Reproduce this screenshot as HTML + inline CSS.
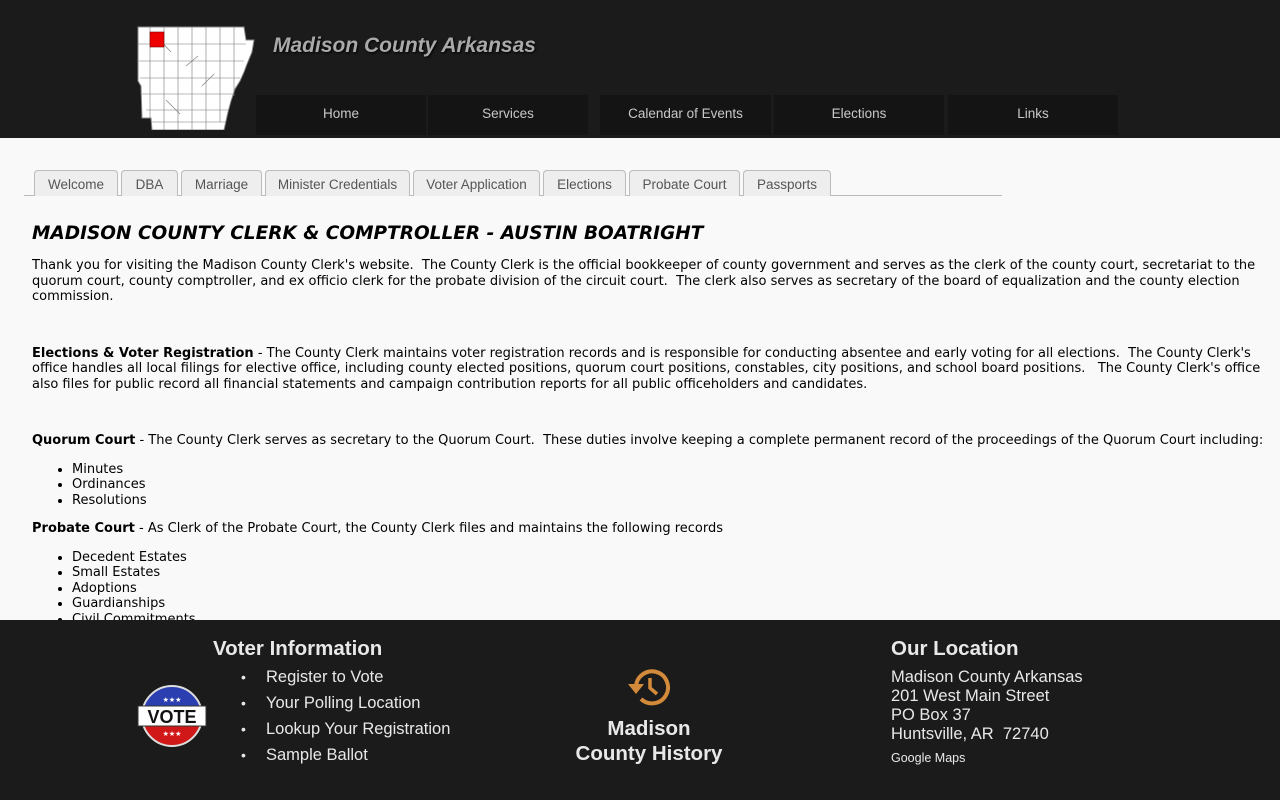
<!DOCTYPE html>
<html><head><meta charset="utf-8"><style>
*{margin:0;padding:0;box-sizing:border-box}
body{width:1280px;height:800px;overflow:hidden;background:#f9f9f9;font-family:"DejaVu Sans",Verdana,sans-serif;position:relative}
#hdr{position:absolute;left:0;top:0;width:1280px;height:138px;background:#1b1b1b}
#title{position:absolute;left:273px;top:34px;font:italic bold 21px "Liberation Sans",sans-serif;color:#a9a9a9;text-shadow:1px 1px 2px #000}
#nav div{position:absolute;top:95px;height:40px;background:#141414;color:#c8c8c8;font:13.5px "Liberation Sans",sans-serif;text-align:center;line-height:38px}
#map{position:absolute;left:136px;top:26px}
#tabs{position:absolute;left:24px;top:170px;width:978px;height:26px;border-bottom:1px solid #bbb}
.tab{position:absolute;top:0;height:26px;border:1px solid #bbb;border-bottom:none;border-radius:4px 4px 0 0;background:#eee;color:#555;font:13.5px "Liberation Sans",sans-serif;text-align:center;line-height:27px}
#main{position:absolute;left:32px;top:223px;width:1240px;font-size:13px;line-height:15.5px;color:#000}
h1{font:italic bold 18.5px "DejaVu Sans",sans-serif;margin-bottom:14px}
p{margin:0}
ul{margin:13px 0 0 40px}
#ftr{position:absolute;left:0;top:620px;width:1280px;height:180px;background:#1b1b1b;color:#e8e8e8;font-family:"Liberation Sans",sans-serif}
.h{font-weight:bold;font-size:20.5px;position:absolute}
.fl{position:absolute;left:266px;font-size:16.5px}
.dot{position:absolute;left:241px;font-size:14px}
.loc{position:absolute;left:891px;font-size:16.5px}
</style></head><body>
<div id="hdr">
<svg id="map" width="120" height="104" viewBox="0 0 120 104">
<path d="M2 1 L108 1 L110 14 L118 14 L116 26 L111 38 L108 46 L104 55 L99 63 L95 75 L92 86 L90 95 L88 104 L16 104 L15 92 L6 92 L5 60 L2 55 Z" fill="#fff" stroke="#888" stroke-width="1"/>
<g stroke="#777" stroke-width="0.6" fill="none">
<path d="M2 18 H110 M3 35 H108 M4 52 H104 M6 68 H98 M10 84 H93 M15 96 H90"/>
<path d="M14 1 V92 M28 1 V104 M42 1 V104 M56 1 V104 M70 1 V104 M84 1 V96 M98 1 V70"/>
<path d="M20 10 L35 26 M50 40 L62 30 M66 60 L78 48 M30 74 L44 88"/>
</g>
<rect x="14" y="6" width="14" height="15" fill="#e00" stroke="#700" stroke-width="0.6"/>
</svg>
<div id="title">Madison County Arkansas</div>
<div id="nav">
<div style="left:256px;width:170px">Home</div><div style="left:428px;width:160px">Services</div><div style="left:600px;width:171px">Calendar of Events</div><div style="left:774px;width:170px">Elections</div><div style="left:948px;width:170px">Links</div>
</div>
</div>
<div id="tabs">
<div class="tab" style="left:10px;width:84px">Welcome</div>
<div class="tab" style="left:97px;width:57px">DBA</div>
<div class="tab" style="left:157px;width:81px">Marriage</div>
<div class="tab" style="left:241px;width:145px">Minister Credentials</div>
<div class="tab" style="left:389px;width:127px">Voter Application</div>
<div class="tab" style="left:519px;width:83px">Elections</div>
<div class="tab" style="left:605px;width:111px">Probate Court</div>
<div class="tab" style="left:719px;width:88px">Passports</div>
</div>
<div id="main">
<h1>MADISON COUNTY CLERK &amp; COMPTROLLER - AUSTIN BOATRIGHT</h1>
<p>Thank you for visiting the Madison County Clerk's website.&nbsp; The County Clerk is the official bookkeeper of county government and serves as the clerk of the county court, secretariat to the quorum court, county comptroller, and ex officio clerk for the probate division of the circuit court.&nbsp; The clerk also serves as secretary of the board of equalization and the county election commission.</p>
<p style="margin-top:41px"><b>Elections &amp; Voter Registration</b> - The County Clerk maintains voter registration records and is responsible for conducting absentee and early voting for all elections.&nbsp; The County Clerk's office handles all local filings for elective office, including county elected positions, quorum court positions, constables, city positions, and school board positions.&nbsp;&nbsp; The County Clerk's office also files for public record all financial statements and campaign contribution reports for all public officeholders and candidates.</p>
<p style="margin-top:41px"><b>Quorum Court</b> - The County Clerk serves as secretary to the Quorum Court.&nbsp; These duties involve keeping a complete permanent record of the proceedings of the Quorum Court including:</p>
<ul><li>Minutes</li><li>Ordinances</li><li>Resolutions</li></ul>
<p style="margin-top:13px"><b>Probate Court</b> - As Clerk of the Probate Court, the County Clerk files and maintains the following records</p>
<ul><li>Decedent Estates</li><li>Small Estates</li><li>Adoptions</li><li>Guardianships</li><li>Civil Commitments</li></ul>
</div>
<div id="ftr">
<div class="h" style="left:213px;top:17px">Voter Information</div>
<div class="dot" style="top:49px">•</div><div class="fl" style="top:48px">Register to Vote</div>
<div class="dot" style="top:75px">•</div><div class="fl" style="top:74px">Your Polling Location</div>
<div class="dot" style="top:101px">•</div><div class="fl" style="top:100px">Lookup Your Registration</div>
<div class="dot" style="top:127px">•</div><div class="fl" style="top:126px">Sample Ballot</div>
<svg style="position:absolute;left:136px;top:65px" width="72" height="62" viewBox="0 0 72 62">
<defs><clipPath id="c"><circle cx="36" cy="31" r="30"/></clipPath></defs>
<g clip-path="url(#c)"><rect x="0" y="0" width="72" height="31" fill="#2b3fb0"/><rect x="0" y="31" width="72" height="31" fill="#d01818"/></g>
<circle cx="36" cy="31" r="30" fill="none" stroke="#ddd" stroke-width="2"/>
<rect x="2" y="21" width="68" height="20" fill="#fff" stroke="#333"/>
<text x="36" y="38" text-anchor="middle" font-family="Liberation Sans" font-weight="bold" font-size="18" fill="#111">VOTE</text>
<text x="36" y="17" text-anchor="middle" font-size="7" fill="#fff">★★★</text>
<text x="36" y="51" text-anchor="middle" font-size="7" fill="#fff">★★★</text>
</svg>
<svg style="position:absolute;left:626px;top:46px" width="46" height="42" viewBox="0 0 46 42">
<path d="M10 21 A16 16 0 1 1 15 33" fill="none" stroke="#d38a3a" stroke-width="4"/>
<path d="M2 18 L18 18 L10 28 Z" fill="#d38a3a"/>
<path d="M24 12 V22 L31 28" fill="none" stroke="#d38a3a" stroke-width="3.5"/>
</svg>
<div class="h" style="left:560px;width:178px;text-align:center;top:96px;line-height:25px">Madison<br>County History</div>
<div class="h" style="left:891px;top:17px">Our Location</div>
<div class="loc" style="top:48px">Madison County Arkansas</div>
<div class="loc" style="top:67px">201 West Main Street</div>
<div class="loc" style="top:86px">PO Box 37</div>
<div class="loc" style="top:105px">Huntsville, AR&nbsp; 72740</div>
<div style="position:absolute;left:891px;top:131px;font-size:12.5px">Google Maps</div>
</div>
</body></html>
